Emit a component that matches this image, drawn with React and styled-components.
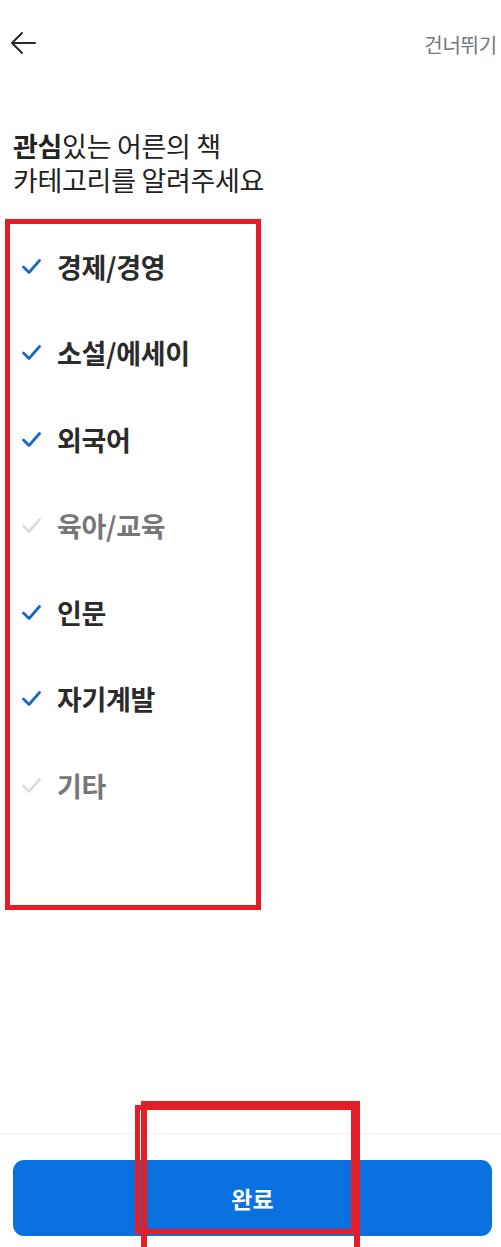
import React from 'react';
import styled, { createGlobalStyle } from 'styled-components';

const GlobalStyle = createGlobalStyle`
  html, body {
    margin: 0;
    padding: 0;
    background: #fff;
  }
  body {
    font-family: "Noto Sans CJK KR", "Noto Sans", sans-serif;
    color: #222;
  }
`;

const Page = styled.div`
  position: relative;
  width: 501px;
  height: 1247px;
  display: flex;
  flex-direction: column;
  overflow: hidden;
`;

const Header = styled.header`
  height: 88px;
  display: flex;
  align-items: center;
  justify-content: space-between;
  padding: 0 4px 0 9px;
  box-sizing: border-box;
`;

const BackButton = styled.button`
  border: 0;
  background: none;
  padding: 0;
  width: 28px;
  height: 28px;
  display: flex;
  align-items: center;
  justify-content: center;
  margin-top: -2px;
`;

const SkipText = styled.span`
  font-size: 20px;
  color: #777;
  letter-spacing: -0.2px;
  margin-top: 1px;
`;

const Title = styled.h1`
  margin: 41px 0 0 13px;
  font-size: 27px;
  line-height: 34px;
  font-weight: 400;
  color: #222;
  letter-spacing: -0.3px;

  strong {
    font-weight: 700;
  }
`;

const List = styled.ul`
  list-style: none;
  margin: 26px 0 0;
  padding: 0;
`;

const Item = styled.li`
  height: 86.5px;
  display: flex;
  align-items: center;
  padding-left: 22px;
  gap: 16px;
`;

const Label = styled.span`
  font-size: 27px;
  font-weight: 700;
  letter-spacing: -0.3px;
  color: ${(p) => (p.$on ? '#2b2b2b' : '#777')};
`;

const Spacer = styled.div`
  flex: 1;
`;

const Footer = styled.footer`
  border-top: 1px solid #f1f1f1;
  padding: 26px 9px 11px 13px;
`;

const DoneButton = styled.button`
  width: 100%;
  height: 76px;
  border: 0;
  border-radius: 11px;
  background: #0a72e0;
  color: #fff;
  font-family: inherit;
  font-size: 23px;
  font-weight: 700;
`;

const Mark = styled.div`
  position: absolute;
  box-sizing: border-box;
  border: ${(p) => p.$w || 5}px solid #e41e26;
  pointer-events: none;
`;

const categories = [
  { name: '경제/경영', on: true },
  { name: '소설/에세이', on: true },
  { name: '외국어', on: true },
  { name: '육아/교육', on: false },
  { name: '인문', on: true },
  { name: '자기계발', on: true },
  { name: '기타', on: false },
];

const Check = ({ on }) => (
  <svg width="19" height="17" viewBox="0 0 19 17">
    <polyline
      points="1.5,9 7,14.5 17.5,2.5"
      fill="none"
      stroke={on ? '#1868c4' : '#dcdcdc'}
      strokeWidth="2.8"
      strokeLinecap="round"
      strokeLinejoin="round"
    />
  </svg>
);

export default function App() {
  return (
    <Page>
      <GlobalStyle />
      <Header>
        <BackButton aria-label="back">
          <svg width="27" height="24" viewBox="0 0 27 24">
            <path
              d="M25 12H3M12 2L2 12l10 10"
              fill="none"
              stroke="#2a2a2a"
              strokeWidth="2"
              strokeLinecap="round"
              strokeLinejoin="round"
            />
          </svg>
        </BackButton>
        <SkipText>건너뛰기</SkipText>
      </Header>
      <Title>
        <strong>관심</strong>있는 어른의 책
        <br />
        카테고리를 알려주세요
      </Title>
      <List>
        {categories.map((c) => (
          <Item key={c.name}>
            <Check on={c.on} />
            <Label $on={c.on}>{c.name}</Label>
          </Item>
        ))}
      </List>
      <Spacer />
      <Footer>
        <DoneButton>완료</DoneButton>
      </Footer>

      <Mark style={{ left: 5, top: 219, width: 256, height: 691 }} $w={5} />
      <Mark style={{ left: 135, top: 1105, width: 221, height: 129 }} $w={5} />
      <Mark style={{ left: 141, top: 1101, width: 219, height: 160 }} $w={6} />
    </Page>
  );
}
